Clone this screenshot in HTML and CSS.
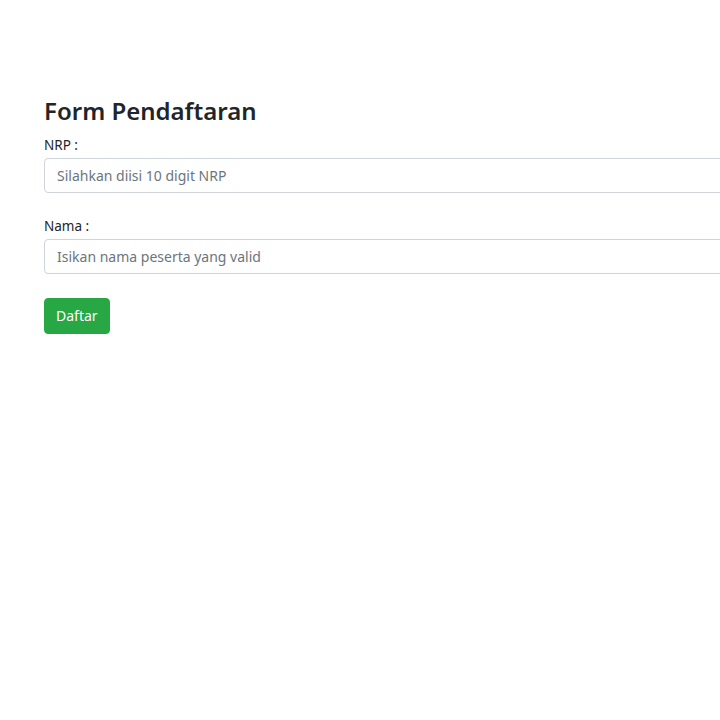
FILE: index.html
```html
<!DOCTYPE html>
<html lang="id">
<head>
<meta charset="utf-8">
<title>Form Pendaftaran</title>
<link rel="stylesheet" href="styles.css">
</head>
<body>
<div class="page">
  <h2 class="title">Form Pendaftaran</h2>
  <form class="form">
    <div class="group">
      <label class="label" for="nrp">NRP :</label>
      <input class="input" id="nrp" type="text" placeholder="Silahkan diisi 10 digit NRP">
    </div>
    <div class="group">
      <label class="label" for="nama">Nama :</label>
      <input class="input" id="nama" type="text" placeholder="Isikan nama peserta yang valid">
    </div>
    <button class="btn" type="button">Daftar</button>
  </form>
</div>
</body>
</html>
```

FILE: styles.css
```css
html, body {
  margin: 0;
  padding: 0;
  background: #fff;
  overflow: hidden;
}
body {
  font-family: "Noto Sans", "Open Sans", sans-serif;
  font-size: 14px;
  color: #212529;
}
.page {
  padding: 97px 0 0 44px;
  width: 760px;
}
.title {
  margin: 0 0 10px 0;
  font-size: 24px;
  font-weight: 600;
  line-height: 1.2;
}
.form {
  display: flex;
  flex-direction: column;
  align-items: flex-start;
}
.group {
  width: 100%;
  margin-bottom: 24px;
}
.label {
  display: block;
  font-size: 13.5px;
  line-height: 19px;
  margin-bottom: 3px;
}
.input {
  box-sizing: border-box;
  display: block;
  width: 100%;
  height: 35px;
  padding: 6px 12px;
  border: 1px solid #ced4da;
  border-radius: 4px;
  font-family: inherit;
  font-size: 14px;
  color: #495057;
  background: #fff;
}
.input::placeholder {
  color: #6c757d;
}
.btn {
  box-sizing: border-box;
  height: 36px;
  padding: 0 11px;
  background: #28a745;
  border: 1px solid #28a745;
  border-radius: 4px;
  color: #fff;
  font-family: inherit;
  font-size: 14px;
  margin-top: 0;
}
```
